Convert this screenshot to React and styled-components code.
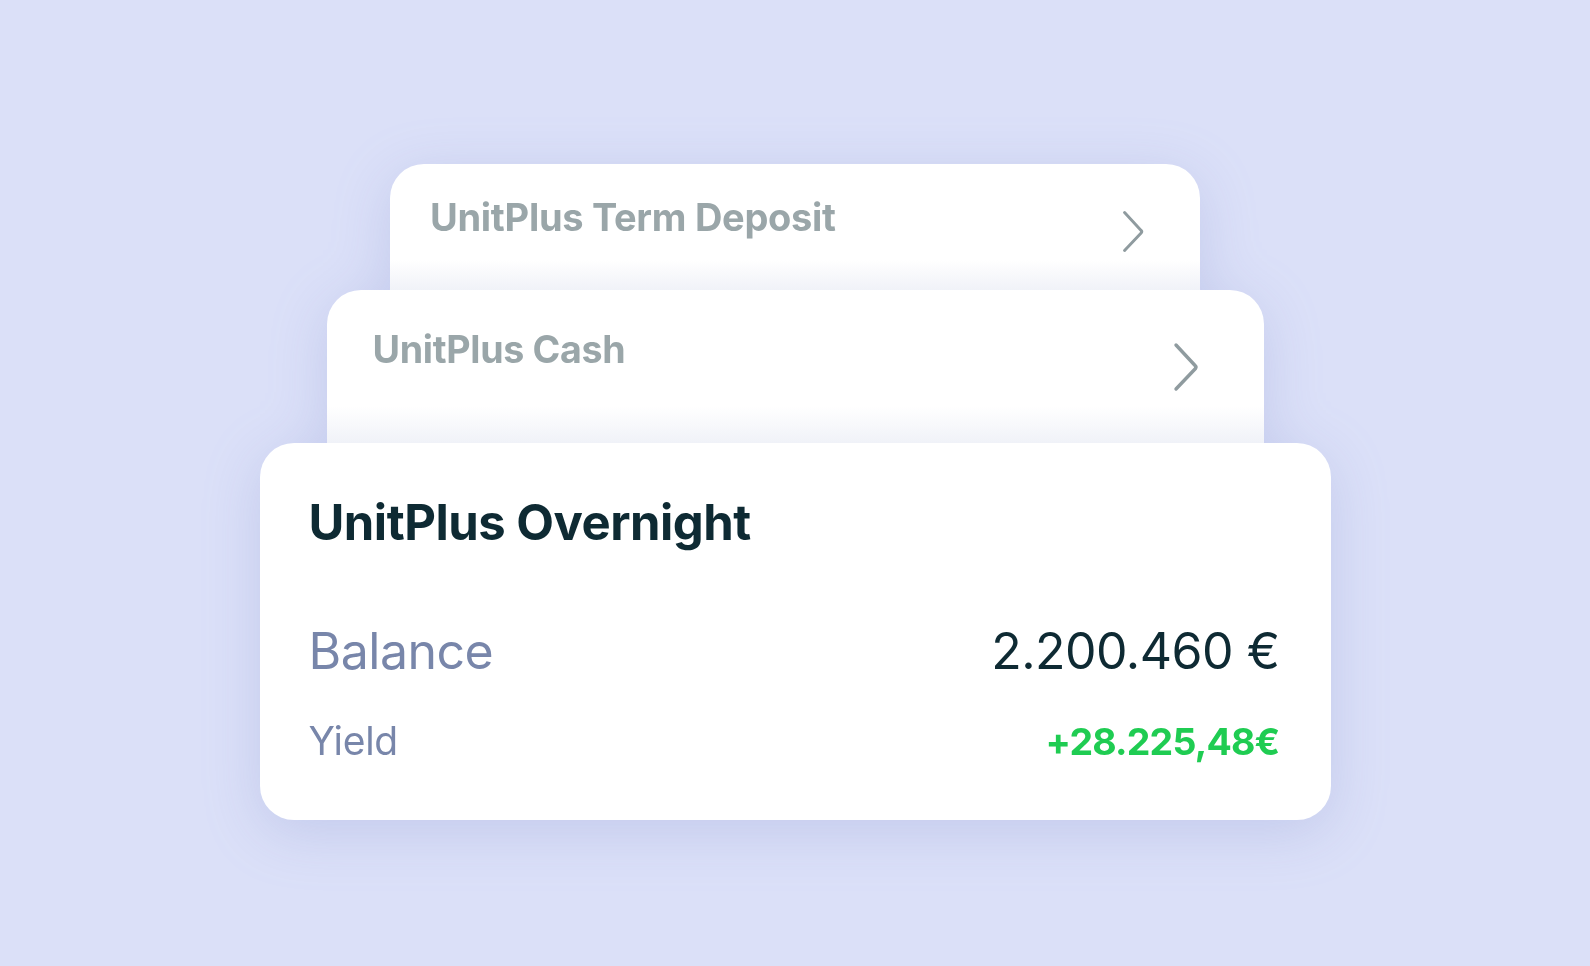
import styled, { createGlobalStyle } from 'styled-components';

const GlobalStyle = createGlobalStyle`
    html, body {
        margin: 0;
        padding: 0;
        background: #dbe0f8;
    }
    * {
        box-sizing: border-box;
    }
`

const accounts = [
    { name: 'UnitPlus Term Deposit', width: 810, height: 126, pad: 34, side: 40, right: 56, size: 38, chevron: 43, chevronTop: 12 },
    { name: 'UnitPlus Cash', width: 937, height: 153, pad: 41, side: 46, right: 65, size: 37.6, chevron: 50, chevronTop: 11 },
]

function Chevron({ size }) {
    return (
        <svg width={size * 0.52} height={size} viewBox="0 0 26 50" fill="none">
            <path d="M3 3 L22.5 24 Q23.5 25 22.5 26.5 L3 47" stroke="#8f9b9f" strokeWidth="3.4" strokeLinecap="round" strokeLinejoin="round" />
        </svg>
    )
}

export default function App() {
    return (
        <>
            <GlobalStyle />
            <Page>
                <Stack>
                    {
                        accounts.map((account, i) => (
                            <BackCard key={account.name} $width={account.width} $height={account.height} $pad={account.pad} $side={account.side} $right={account.right} $z={i + 1}>
                                <BackTitle $size={account.size}>{account.name}</BackTitle>
                                <ChevronBox $top={account.chevronTop}>
                                    <Chevron size={account.chevron} />
                                </ChevronBox>
                            </BackCard>
                        ))
                    }
                    <FrontCard>
                        <Title>UnitPlus Overnight</Title>
                        <BalanceRow>
                            <BalanceLabel>Balance</BalanceLabel>
                            <Amount>2.200.460 €</Amount>
                        </BalanceRow>
                        <YieldRow>
                            <YieldLabel>Yield</YieldLabel>
                            <YieldValue>+28.225,48€</YieldValue>
                        </YieldRow>
                    </FrontCard>
                </Stack>
            </Page>
        </>
    )
}

const Page = styled.div`
    width: 100%;
    min-height: 100vh;
    background: #dbe0f8;
    display: flex;
    justify-content: center;
    padding-top: 164px;
    font-family: 'Inter', 'Liberation Sans', sans-serif;
`

const Stack = styled.div`
    display: flex;
    flex-direction: column;
    align-items: center;
    filter: drop-shadow(0 12px 28px rgba(110, 122, 196, 0.22));
`

const BackCard = styled.div`
    position: relative;
    z-index: ${p => p.$z};
    width: ${p => p.$width}px;
    height: ${p => p.$height}px;
    padding: ${p => p.$pad}px ${p => p.$right}px 0 ${p => p.$side}px;
    border-radius: 34px 34px 0 0;
    background: linear-gradient(to bottom, #ffffff 0%, #ffffff 76%, #f0f2f8 100%);
    display: flex;
    justify-content: space-between;
    align-items: flex-start;
`

const BackTitle = styled.h2`
    margin: 0;
    font-size: ${p => p.$size}px;
    line-height: 1;
    font-weight: 700;
    letter-spacing: -0.3px;
    color: #9aa6a9;
`

const ChevronBox = styled.div`
    margin-top: ${p => p.$top}px;
    display: flex;
`

const FrontCard = styled.div`
    position: relative;
    z-index: 3;
    width: 1071px;
    height: 377px;
    border-radius: 34px;
    background: #ffffff;
    padding: 55px 51px 0 49px;
    display: flex;
    flex-direction: column;
`

const Title = styled.h1`
    margin: 0;
    font-size: 49px;
    line-height: 1;
    font-weight: 700;
    letter-spacing: -0.5px;
    color: #0e2a33;
`

const BalanceRow = styled.div`
    display: flex;
    justify-content: space-between;
    align-items: baseline;
    margin-top: 79px;
`

const BalanceLabel = styled.span`
    font-size: 50px;
    line-height: 1;
    font-weight: 400;
    letter-spacing: -0.5px;
    color: #7886aa;
`

const Amount = styled.span`
    font-size: 50px;
    line-height: 1;
    font-weight: 400;
    letter-spacing: -0.5px;
    color: #0e2a33;
`

const YieldRow = styled.div`
    display: flex;
    justify-content: space-between;
    align-items: baseline;
    margin-top: 45px;
`

const YieldLabel = styled.span`
    font-size: 39px;
    line-height: 1;
    font-weight: 400;
    letter-spacing: -0.3px;
    color: #7886aa;
`

const YieldValue = styled.span`
    font-size: 37.5px;
    line-height: 1;
    font-weight: 700;
    letter-spacing: -0.8px;
    color: #1fcc52;
`
